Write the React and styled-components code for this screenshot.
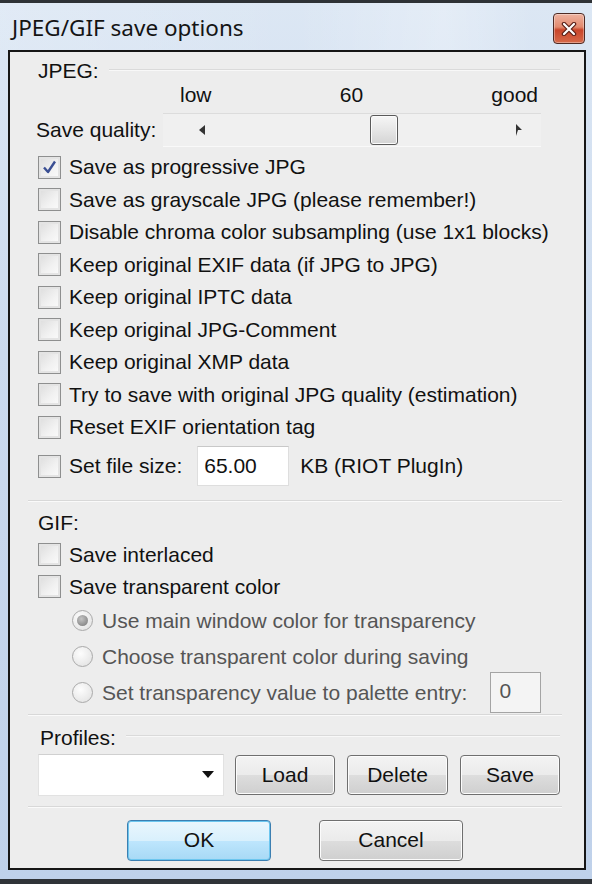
import React from 'react';
import styled, { createGlobalStyle } from 'styled-components';

const GlobalStyle = createGlobalStyle`
    html, body {
        margin: 0;
        padding: 0;
        background: #c8d8ee;
    }
    * { box-sizing: border-box; }
`

const jpegOptions = [
    { label: 'Save as progressive JPG', checked: true },
    { label: 'Save as grayscale JPG (please remember!)' },
    { label: 'Disable chroma color subsampling (use 1x1 blocks)' },
    { label: 'Keep original EXIF data (if JPG to JPG)' },
    { label: 'Keep original IPTC data' },
    { label: 'Keep original JPG-Comment' },
    { label: 'Keep original XMP data' },
    { label: 'Try to save with original JPG quality (estimation)' },
    { label: 'Reset EXIF orientation tag' },
]

const transparencyOptions = [
    { label: 'Use main window color for transparency', selected: true },
    { label: 'Choose transparent color during saving' },
    { label: 'Set transparency value to palette entry:', input: '0' },
]

function Checkbox({ checked }) {
    return (
        <Box>
            {checked && (
                <svg width="17" height="17" viewBox="0 0 17 17">
                    <path d="M3 8.5 L7 13 L14 2.5" fill="none" stroke="#3a4f93" strokeWidth="2.4" strokeLinejoin="round" />
                </svg>
            )}
        </Box>
    )
}

function Slider({ value }) {
    return (
        <Track>
            <svg width="8" height="10" viewBox="0 0 8 10">
                <polygon points="6,0 6,10 0,5" fill="#333" />
            </svg>
            <Thumb style={{ left: `${(value / 100) * 344}px` }} />
            <svg width="8" height="12" viewBox="0 0 8 12">
                <polygon points="1,0 7,6 3,6 1,12" fill="#333" />
            </svg>
        </Track>
    )
}

function App() {
    return (
        <>
            <GlobalStyle />
            <Window>
                <TitleBar>
                    <Title>JPEG/GIF save options</Title>
                    <CloseButton>
                        <svg width="16" height="14" viewBox="0 0 16 14">
                            <path d="M3 2 L13 12 M13 2 L3 12" stroke="#5a2018" strokeWidth="4.5" strokeLinecap="round" />
                            <path d="M3 2 L13 12 M13 2 L3 12" stroke="#fff" strokeWidth="2.2" strokeLinecap="round" />
                        </svg>
                    </CloseButton>
                </TitleBar>
                <Client>
                    <GroupHeader>
                        <span>JPEG:</span>
                        <HeaderLine />
                    </GroupHeader>
                    <QualityLabels>
                        <span>low</span>
                        <span>60</span>
                        <span>good</span>
                    </QualityLabels>
                    <SliderRow>
                        <span>Save quality:</span>
                        <Slider value={60} />
                    </SliderRow>
                    {jpegOptions.map(opt => (
                        <CheckRow key={opt.label}>
                            <Checkbox checked={opt.checked} />
                            <span>{opt.label}</span>
                        </CheckRow>
                    ))}
                    <FileSizeRow>
                        <Checkbox />
                        <span>Set file size:</span>
                        <TextInput $width={92}>65.00</TextInput>
                        <span>KB (RIOT PlugIn)</span>
                    </FileSizeRow>
                    <Separator $top={11} />
                    <GifLabel>GIF:</GifLabel>
                    <CheckRow $height={32} $top={2}>
                        <Checkbox />
                        <span>Save interlaced</span>
                    </CheckRow>
                    <CheckRow $height={32}>
                        <Checkbox />
                        <span>Save transparent color</span>
                    </CheckRow>
                    {transparencyOptions.map(opt => (
                        <RadioRow key={opt.label}>
                            <Radio $selected={opt.selected} />
                            <span>{opt.label}</span>
                            {opt.input && <PaletteInput>{opt.input}</PaletteInput>}
                        </RadioRow>
                    ))}
                    <Separator $top={3} />
                    <ProfilesHeader>
                        <span>Profiles:</span>
                        <HeaderLine />
                    </ProfilesHeader>
                    <ProfilesRow>
                        <Select>
                            <svg width="12" height="8" viewBox="0 0 12 8">
                                <polygon points="0,0 12,0 6,7" fill="#111" />
                            </svg>
                        </Select>
                        <Button $width={100}>Load</Button>
                        <Button $width={101}>Delete</Button>
                        <Button $width={100}>Save</Button>
                    </ProfilesRow>
                    <Separator $top={10} />
                    <DialogButtons>
                        <Button $width={144} $height={41} $default>OK</Button>
                        <Button $width={144} $height={41}>Cancel</Button>
                    </DialogButtons>
                </Client>
            </Window>
        </>
    )
}

export default App

const Window = styled.div`
    width: 592px;
    height: 884px;
    display: flex;
    flex-direction: column;
    border-top: 3px solid #2e3236;
    border-bottom: 5px solid #2f3338;
    padding-bottom: 9px;
    background: linear-gradient(180deg, #dce7f4 0%, #cbdaee 40%, #bfd1ea 100%);
    font-family: "Liberation Sans", Arial, sans-serif;
    font-size: 21px;
    color: #111;
`
const TitleBar = styled.div`
    height: 47px;
    display: flex;
    align-items: center;
    justify-content: space-between;
    padding: 0 7px 0 12px;
    background: linear-gradient(90deg, rgba(255,255,255,0.15) 0%, rgba(255,255,255,0) 50%, rgba(255,255,255,0.25) 75%, rgba(255,255,255,0) 90%);
`
const Title = styled.span`
    font-family: "Noto Sans", "Open Sans", sans-serif;
    font-size: 22.5px;
    color: #141414;
    margin-top: 1px;
`
const CloseButton = styled.div`
    width: 32px;
    height: 31px;
    margin-top: 4px;
    border: 1px solid #4e2a24;
    border-radius: 4px;
    display: flex;
    align-items: center;
    justify-content: center;
    background: linear-gradient(180deg, #eeb2a0 0%, #e28a6f 45%, #c9452a 55%, #d66a4b 100%);
    box-shadow: inset 0 0 0 1px rgba(255,255,255,0.35);
`
const Client = styled.div`
    flex: 1;
    margin: 0 6px 0 8px;
    border: 2px solid #161616;
    background: #ededed;
    padding: 6px 24px 0 28px;
    display: flex;
    flex-direction: column;
`
const GroupHeader = styled.div`
    height: 26px;
    display: flex;
    align-items: center;
    gap: 10px;
`
const HeaderLine = styled.div`
    flex: 1;
    height: 2px;
    margin-top: -2px;
    border-top: 1px solid #dadada;
    border-bottom: 1px solid #f8f8f8;
`
const QualityLabels = styled.div`
    height: 22px;
    display: flex;
    align-items: center;
    justify-content: space-between;
    margin-left: 142px;
    width: 358px;
`
const SliderRow = styled.div`
    height: 42px;
    margin-top: 3px;
    display: flex;
    align-items: center;
    gap: 7px;
    margin-left: -2px;
`
const Track = styled.div`
    position: relative;
    width: 378px;
    height: 34px;
    display: flex;
    align-items: center;
    justify-content: space-between;
    padding: 0 18px 0 36px;
    background: #f0f0f0;
    border-top: 1px solid #dcdcdc;
    border-bottom: 1px solid #f9f9f9;
`
const Thumb = styled.div`
    position: absolute;
    top: 1px;
    width: 28px;
    height: 30px;
    border: 1px solid #5a5a5a;
    border-radius: 3px;
    background: linear-gradient(180deg, #f6f6f6 0%, #e6e6e6 50%, #d4d4d4 100%);
    box-shadow: inset 0 0 0 1px #fbfbfb;
`
const CheckRow = styled.label`
    height: ${p => p.$height || 32.5}px;
    margin-top: ${p => p.$top || 0}px;
    display: flex;
    align-items: center;
    gap: 8px;
`
const Box = styled.span`
    width: 23px;
    height: 23px;
    flex-shrink: 0;
    border: 1px solid #8e8f8f;
    background: linear-gradient(135deg, #dcdcdc 0%, #f2f2f2 60%, #fbfbfb 100%);
    box-shadow: inset 0 0 0 2px #e4e4e4;
    display: flex;
    align-items: center;
    justify-content: center;
`
const FileSizeRow = styled(CheckRow)`
    height: 45px;
    & > span:nth-of-type(2) {
        margin-right: 7px;
    }
    & > div {
        margin-right: 3px;
    }
`
const TextInput = styled.div`
    width: ${p => p.$width}px;
    height: 40px;
    background: #fff;
    border: 1px solid #dedede;
    border-top-color: #c8c8c8;
    display: flex;
    align-items: center;
    padding-left: 6px;
    color: #111;
`
const Separator = styled.div`
    height: 2px;
    margin: ${p => p.$top}px -2px 0 -10px;
    border-top: 1px solid #d8d8d8;
    border-bottom: 1px solid #fafafa;
`
const GifLabel = styled.div`
    height: 28px;
    margin-top: 7px;
    display: flex;
    align-items: center;
`
const RadioRow = styled.div`
    height: 36px;
    display: flex;
    align-items: center;
    gap: 9px;
    margin-left: 34px;
    color: #555;
`
const Radio = styled.span`
    width: 21px;
    height: 21px;
    flex-shrink: 0;
    border-radius: 50%;
    border: 1px solid #a9a9a9;
    background: radial-gradient(circle at 40% 35%, #fdfdfd 0%, #e8e8e8 70%, #d8d8d8 100%);
    display: flex;
    align-items: center;
    justify-content: center;
    &::after {
        content: '';
        display: ${p => (p.$selected ? 'block' : 'none')};
        width: 11px;
        height: 11px;
        border-radius: 50%;
        background: radial-gradient(circle at 40% 35%, #c4c4c4 0%, #8d8d8d 70%, #7a7a7a 100%);
    }
`
const PaletteInput = styled.div`
    width: 51px;
    height: 41px;
    margin-left: 14px;
    background: #f4f4f4;
    border: 1px solid #a4a4a4;
    padding: 6px 0 0 8px;
    color: #555;
`
const ProfilesHeader = styled(GroupHeader)`
    height: 28px;
    margin-top: 7px;
    margin-left: 2px;
    & > span {
        margin-top: 2px;
    }
`
const ProfilesRow = styled.div`
    height: 42px;
    margin-top: 3px;
    display: flex;
    align-items: center;
    gap: 12px;
`
const Select = styled.div`
    width: 186px;
    height: 42px;
    margin-right: -1px;
    background: #fff;
    border: 1px solid #e2e2e2;
    border-top-color: #d0d0d0;
    display: flex;
    align-items: center;
    justify-content: flex-end;
    padding-right: 9px;
`
const Button = styled.div`
    width: ${p => p.$width}px;
    height: ${p => p.$height || 40}px;
    border: 1px solid ${p => (p.$default ? '#3c7fb1' : '#6f6f6f')};
    border-radius: 4px;
    display: flex;
    align-items: center;
    justify-content: center;
    background: ${p => (p.$default
        ? 'linear-gradient(180deg, #eaf6fd 0%, #d9f0fc 50%, #bee6fd 51%, #a7d9f5 100%)'
        : 'linear-gradient(180deg, #f3f3f3 0%, #ebebeb 50%, #dddddd 51%, #cfcfcf 100%)')};
    box-shadow: inset 0 0 0 1px ${p => (p.$default ? '#6cc6ef' : '#fcfcfc')};
    color: #111;
`
const DialogButtons = styled.div`
    margin-top: 12px;
    display: flex;
    gap: 48px;
    padding-left: 89px;
`
